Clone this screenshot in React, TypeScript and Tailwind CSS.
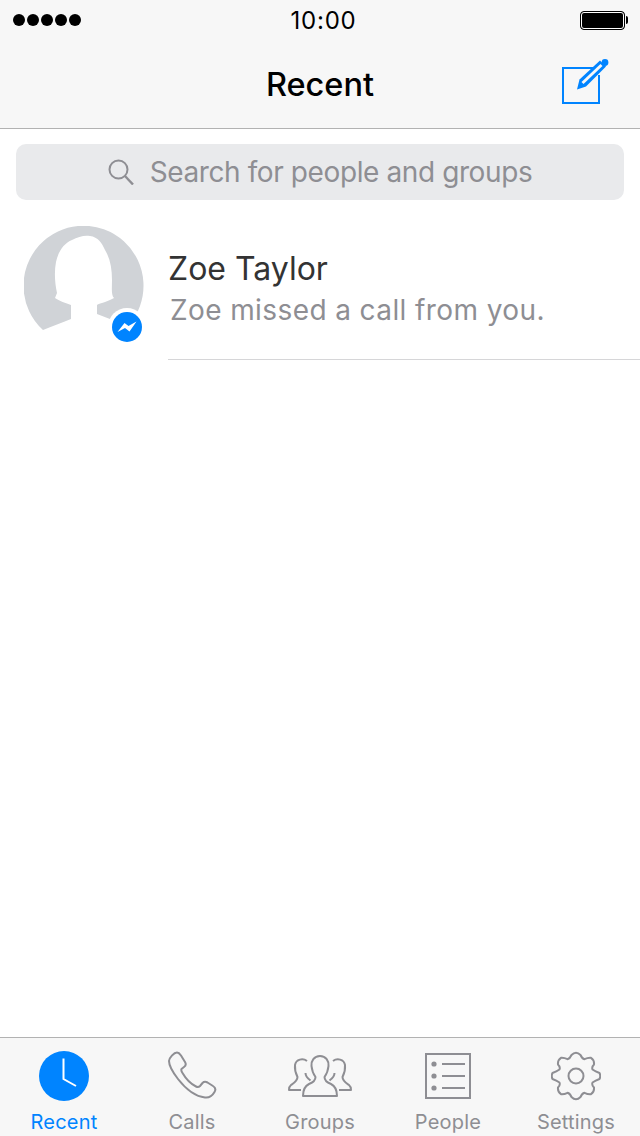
const font = "font-['Inter','Liberation_Sans',sans-serif]";

function StatusBar() {
  return (
    <div className="flex h-10 items-center pl-[13px] pr-[12px]">
      <div className="flex flex-1 gap-[2px]">
        {[0, 1, 2, 3, 4].map((i) => (
          <span key={i} className="h-[12px] w-[12px] rounded-full bg-black" />
        ))}
      </div>
      <span className="ml-[6px] pt-[2px] text-[24px] leading-none tracking-[0.8px] text-black">10:00</span>
      <div className="flex flex-1 items-center justify-end">
        <div className="h-[19px] w-[45px] rounded-[4px] border border-black bg-black outline outline-1 outline-white [outline-offset:-2px]" />
        <div className="ml-[0.5px] h-[8px] w-[2.5px] rounded-r-full bg-black" />
      </div>
    </div>
  );
}

function ComposeIcon() {
  return (
    <svg width="50" height="50" viewBox="0 0 50 50" fill="none">
      <path d="M33 10H3V45H39V17" stroke="#0084ff" strokeWidth="2" />
      <path d="M17 31.5 L19.5 21.5 L40 2.5 L46 8.5 L26 28.5 Z" fill="#0084ff" />
      <path d="M21.5 24 L40.5 6 L42.5 8 L23.5 26 Z" fill="#f7f7f7" />
      <circle cx="45" cy="4.5" r="3.4" fill="#0084ff" />
    </svg>
  );
}

function SearchIcon() {
  return (
    <svg width="26" height="26" viewBox="0 0 26 26" fill="none" stroke="#8e8e93" strokeWidth="2">
      <circle cx="10.5" cy="10.5" r="9" />
      <path d="M17 17 L25 25.5" strokeWidth="2.4" />
    </svg>
  );
}

function Avatar() {
  return (
    <div className="relative h-[120px] w-[120px]">
      <svg width="120" height="120" viewBox="0 0 120 120">
        <path
          d="M19 104 A60 60 0 1 1 104 100 L73 88 L73 79 C76 77 80 77 90 72 C87 69 88 62 88 54 C88 42 86 32 81 24 C78 17 74 11 66 10 C60 9 54 11 48 14 C40 17 34 26 32 36 C30 46 31 58 33 67 L31 72 C35 75 42 77 47 79 L47 93 C38 97 28 100 19 104 Z"
          fill="#d0d3d7"
        />
      </svg>
      <div className="absolute left-[84px] top-[82px] flex h-[38px] w-[38px] items-center justify-center rounded-full bg-white">
        <div className="flex h-[30px] w-[30px] items-center justify-center rounded-full bg-[#0084ff]">
          <svg width="20" height="12" viewBox="0 0 20 12">
            <path d="M0.5 11 L7.5 2 L11.5 5 L19.5 0.5 L12.5 10.5 L8 7 Z" fill="#fff" />
          </svg>
        </div>
      </div>
    </div>
  );
}

function RecentIcon() {
  return (
    <svg width="50" height="50" viewBox="0 0 50 50">
      <circle cx="25" cy="25" r="25" fill="#0084ff" />
      <path d="M24.5 7.5 V28 L37 35" fill="none" stroke="#fff" strokeWidth="2" />
    </svg>
  );
}

function CallsIcon() {
  return (
    <svg width="50" height="50" viewBox="0 0 50 50" fill="none" stroke="#8e8e93" strokeWidth="2" strokeLinejoin="round">
      <path d="M2 10 C2 7 7 1.5 10 1.5 C12 1.5 13 3 14 4.5 L18 11 C19.5 13.5 18.5 15 17 16 L14.5 18 C14 19 14.5 20.5 15.5 22 C19 28 24 33 29 35.5 C31 36.5 32 36 33 35 L35.5 32 C37 30.5 38.5 30.5 40.5 31.5 L46 35 C48.5 36.5 49 38.5 47.5 41 C45.5 44.5 42 47 38 46.5 C28 45.5 18 37 11 28 C6 21.5 2 15 2 10 Z" />
    </svg>
  );
}

function GroupsIcon() {
  return (
    <svg width="64" height="42" viewBox="0 0 64 42" fill="none" stroke="#8e8e93" strokeWidth="2" strokeLinejoin="round">
      <path d="M32 1 C26 1 23 6 23.5 11 C24 16 26 20 27.5 22 C27.5 26 25 27.5 21 29 C17 31 15 34 15 41 H49 C49 34 47 31 43 29 C39 27.5 36.5 26 36.5 22 C38 20 40 16 40.5 11 C41 6 38 1 32 1 Z" />
      <path d="M19 6 C15 3 8 4 7 10 C6.5 15 8 19 9.5 22 C9.5 26 6 28 3 30 C1 31.5 1 33 1 35 H13" />
      <path d="M17.5 18 C17.5 21 19 23 22.5 25.5" />
      <path d="M45 6 C49 3 56 4 57 10 C57.5 15 56 19 54.5 22 C54.5 26 58 28 61 30 C63 31.5 63 33 63 35 H51" />
      <path d="M46.5 18 C46.5 21 45 23 41.5 25.5" />
    </svg>
  );
}

function PeopleIcon() {
  return (
    <svg width="46" height="46" viewBox="0 0 46 46" fill="none" stroke="#8e8e93">
      <rect x="1" y="1" width="44" height="44" strokeWidth="2" />
      <path d="M17 11 H40 M17 23 H40 M17 35 H40" strokeWidth="2" />
      <circle cx="9" cy="11" r="2.6" fill="#8e8e93" stroke="none" />
      <circle cx="9" cy="23" r="2.6" fill="#8e8e93" stroke="none" />
      <circle cx="9" cy="35" r="2.6" fill="#8e8e93" stroke="none" />
    </svg>
  );
}

function SettingsIcon() {
  return (
    <svg width="50" height="50" viewBox="0 0 50 50" fill="none" stroke="#8e8e93" strokeWidth="2" strokeLinejoin="round">
      <circle cx="25" cy="25" r="7.5" />
      <path d="M20.5 4 Q25 -0.5 29.5 4 Q31 7.5 33.5 8.2 Q37 6.5 40 6.8 Q43.5 9 43 13.5 Q40.5 16 41.5 18.5 Q44.5 20.5 48.5 22 Q50 25 48.5 28 Q44.5 29.5 41.5 31.5 Q40.5 34 43 36.5 Q43.5 41 40 43.2 Q37 43.5 33.5 41.8 Q31 42.5 29.5 46 Q25 50.5 20.5 46 Q19 42.5 16.5 41.8 Q13 43.5 10 43.2 Q6.5 41 7 36.5 Q9.5 34 8.5 31.5 Q5.5 29.5 1.5 28 Q0 25 1.5 22 Q5.5 20.5 8.5 18.5 Q9.5 16 7 13.5 Q6.5 9 10 6.8 Q13 6.5 16.5 8.2 Q19 7.5 20.5 4 Z" />
    </svg>
  );
}

const tabs = [
  { label: 'Recent', icon: <RecentIcon />, active: true },
  { label: 'Calls', icon: <CallsIcon />, active: false },
  { label: 'Groups', icon: <GroupsIcon />, active: false },
  { label: 'People', icon: <PeopleIcon />, active: false },
  { label: 'Settings', icon: <SettingsIcon />, active: false },
];

export default function App() {
  return (
    <div className={`${font} flex h-[1136px] w-[640px] flex-col overflow-hidden bg-white`}>
      <header className="h-[129px] border-b border-[#b2b2b2] bg-[#f7f7f7]">
        <StatusBar />
        <div className="relative flex h-[88px] items-center justify-center pt-[2px]">
          <h1 className="text-[32.5px] font-medium leading-none text-black">Recent</h1>
          <div className="absolute left-[560px] top-[18px]">
            <ComposeIcon />
          </div>
        </div>
      </header>

      <div className="px-4 pt-[15px]">
        <div className="flex h-14 items-center justify-center gap-4 rounded-[10px] bg-[#e9eaec]">
          <SearchIcon />
          <span className="text-[28px] leading-none tracking-[-0.4px] text-[#8e8e93]">Search for people and groups</span>
        </div>
      </div>

      <div className="flex h-40 pl-6">
        <div className="pt-[26px]">
          <Avatar />
        </div>
        <div className="ml-6 flex flex-1 flex-col border-b border-[#d6d6d8] pt-[50px]">
          <span className="text-[32px] leading-[38px] text-[#333333]">Zoe Taylor</span>
          <span className="ml-[2px] mt-[5px] text-[28px] leading-[34px] tracking-[0.4px] text-[#8e8e93]">Zoe missed a call from you.</span>
        </div>
      </div>

      <div className="flex-1" />

      <nav className="grid h-[99px] grid-cols-5 border-t border-[#b2b2b2] bg-[#f7f7f7]">
        {tabs.map((t) => (
          <div key={t.label} className="flex flex-col items-center">
            <div className="flex h-[72px] items-center justify-center pt-1">{t.icon}</div>
            <span className={`text-[20px] leading-6 tracking-[0.2px] ${t.active ? 'text-[#0084ff]' : 'text-[#8e8e93]'}`}>{t.label}</span>
          </div>
        ))}
      </nav>
    </div>
  );
}
